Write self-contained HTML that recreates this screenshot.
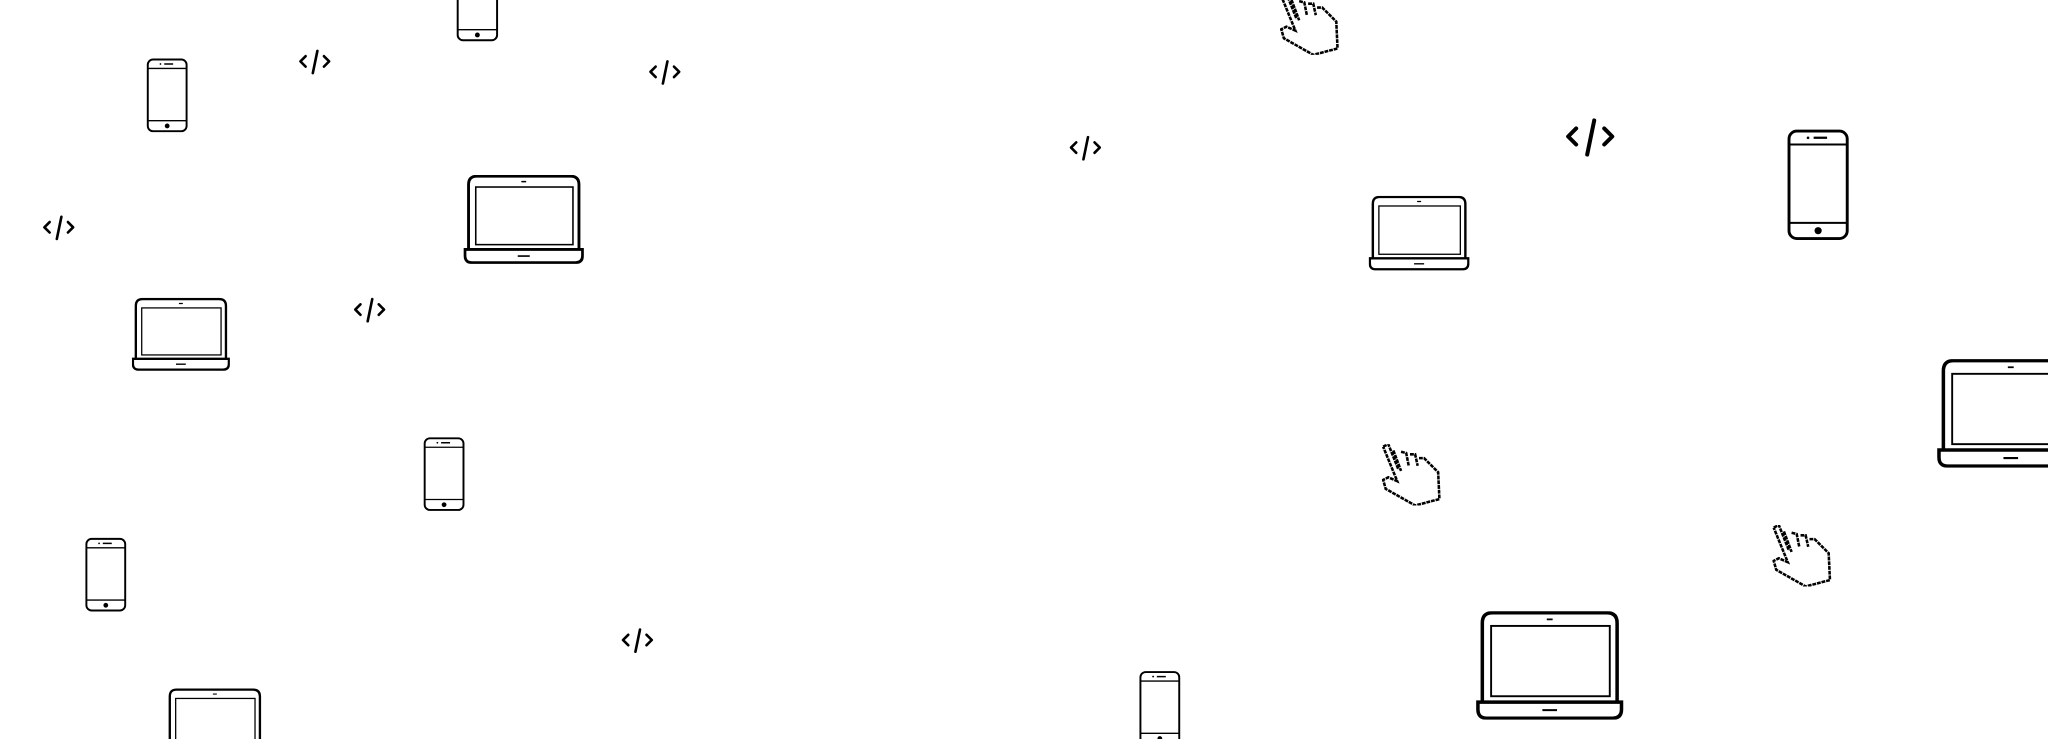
<!DOCTYPE html>
<html><head><style>
html,body{margin:0;padding:0;background:#fff;overflow:hidden;width:2048px;height:739px}
#c{position:absolute;left:0;top:0;width:2048px;height:739px;overflow:hidden}
#w{position:absolute;left:0;top:0;width:1568px;height:566px;transform:scale(1.30612);transform-origin:0 0;overflow:hidden}
svg{position:absolute;overflow:visible}
</style></head><body>
<svg width="0" height="0" style="position:absolute">
<defs>
<symbol id="lap" viewBox="0 0 100 74">
<path d="M4,62 V8 Q4,1 11,1 H89 Q96,1 96,8 V62" fill="none" stroke="#000" stroke-width="2.4"/>
<rect x="10" y="10" width="81" height="48" fill="none" stroke="#000" stroke-width="1.3"/>
<line x1="48" y1="5.5" x2="52" y2="5.5" stroke="#000" stroke-width="1.2"/>
<path d="M1,62 H99 V67 Q99,73 93,73 H7 Q1,73 1,67 Z" fill="none" stroke="#000" stroke-width="2.4"/>
<line x1="45" y1="67.5" x2="55" y2="67.5" stroke="#000" stroke-width="1.4"/>
</symbol>
<symbol id="ph" viewBox="0 0 56 100">
<rect x="2" y="2" width="52" height="96" rx="7" fill="none" stroke="#000" stroke-width="2.6"/>
<line x1="2" y1="14" x2="54" y2="14" stroke="#000" stroke-width="1.8"/>
<line x1="2" y1="84" x2="54" y2="84" stroke="#000" stroke-width="1.8"/>
<line x1="24" y1="8" x2="36" y2="8" stroke="#000" stroke-width="2"/>
<circle cx="19" cy="8" r="1.2"/>
<circle cx="28" cy="91" r="3.2"/>
</symbol>
<symbol id="code" viewBox="0 0 28 20">
<g fill="none" stroke="#000" stroke-width="2" stroke-linecap="round" stroke-linejoin="round">
<polyline points="7,6 3,10 7,14"/><line x1="16" y1="2" x2="12.5" y2="19"/><polyline points="21,6 25,10 21,14"/></g>
</symbol>
<symbol id="hand" viewBox="0 0 48 48">
<g fill="none" stroke="#000" stroke-width="2" stroke-dasharray="3 0.7">
<path d="M1,2 L5,0 L13,20 M9,5 L15,21 M15,6 L19,7 L21,17 M22,8 L26,8 L28,17 M29,11 L33,11 L38,16 L44,22 L45,43 L26,48 L3,35 L1,28 L5,26 L12,29 L1,2"/>
</g>
</symbol>
</defs></svg>
<div id="c"><div id="w">
<svg style="left:355px;top:134px" width="92" height="68"><use href="#lap"/></svg>
<svg style="left:101px;top:228px" width="75" height="56"><use href="#lap"/></svg>
<svg style="left:1048px;top:150px" width="77" height="57"><use href="#lap"/></svg>
<svg style="left:1130px;top:468px" width="113" height="83"><use href="#lap"/></svg>
<svg style="left:1483px;top:275px" width="113" height="83"><use href="#lap"/></svg>
<svg style="left:127px;top:527px" width="75" height="56"><use href="#lap"/></svg>

<svg style="left:349px;top:-26px" width="33" height="58"><use href="#ph"/></svg>
<svg style="left:112px;top:44px" width="32" height="58"><use href="#ph"/></svg>
<svg style="left:324px;top:334px" width="32" height="58"><use href="#ph"/></svg>
<svg style="left:65px;top:411px" width="32" height="58"><use href="#ph"/></svg>
<svg style="left:872px;top:513px" width="32" height="58"><use href="#ph"/></svg>
<svg style="left:1368px;top:98px" width="48" height="87"><use href="#ph"/></svg>

<svg style="left:227px;top:37px" width="28" height="20"><use href="#code"/></svg>
<svg style="left:495px;top:45px" width="28" height="20"><use href="#code"/></svg>
<svg style="left:31px;top:164px" width="28" height="20"><use href="#code"/></svg>
<svg style="left:269px;top:227px" width="28" height="20"><use href="#code"/></svg>
<svg style="left:817px;top:103px" width="28" height="20"><use href="#code"/></svg>
<svg style="left:474px;top:480px" width="28" height="20"><use href="#code"/></svg>
<svg style="left:1196px;top:89px" width="43" height="31"><use href="#code"/></svg>

<svg style="left:980px;top:-5px" width="47" height="47"><use href="#hand"/></svg>
<svg style="left:1058px;top:340px" width="47" height="47"><use href="#hand"/></svg>
<svg style="left:1357px;top:402px" width="47" height="47"><use href="#hand"/></svg>
</div></div>
</body></html>
